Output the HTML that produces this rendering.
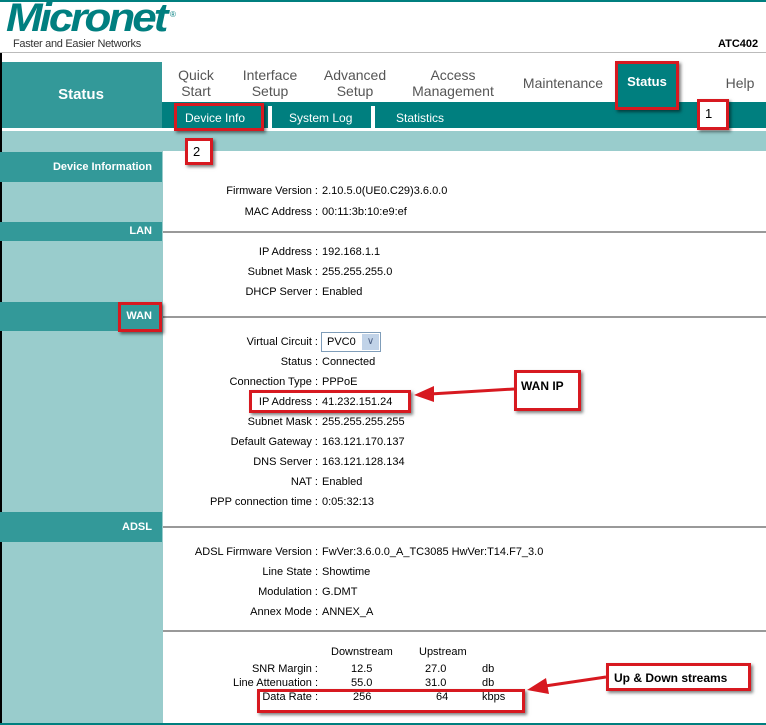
<!DOCTYPE html>
<html><head><meta charset="utf-8"><style>
*{margin:0;padding:0;box-sizing:border-box}
html,body{width:766px;height:725px;overflow:hidden}
body{position:relative;background:#fff;font-family:"Liberation Sans",sans-serif;font-size:11px;color:#000}
.a{position:absolute}
.l{position:absolute;right:448px;white-space:nowrap}
.v{position:absolute;left:322px;white-space:nowrap}
.row{position:absolute;left:0;width:766px;height:14px;line-height:14px}
.sh{position:absolute;left:0;width:162px;background:#339999;color:#fff;font-weight:bold;text-align:right;padding-right:10px}
.hl{position:absolute;left:163px;right:0;height:2px;background:#999}
.nav{position:absolute;color:#555;font-size:14px;text-align:center;line-height:16px}
.red{position:absolute;border:3px solid #d71920;box-shadow:2px 2px 3px rgba(0,0,0,.5)}
</style></head><body>
<div class="a" style="left:0;top:0;width:766px;height:2px;background:#007f7f"></div>
<div class="a" style="left:6px;top:-4px;font-size:44px;font-weight:bold;font-style:italic;color:#007f80;letter-spacing:-3px;transform:scaleY(0.9);transform-origin:top left">Micronet</div>
<div class="a" style="left:170px;top:10px;font-size:8px;color:#007f80">®</div>
<div class="a" style="left:13px;top:38px;font-size:11px;color:#333;letter-spacing:-0.3px">Faster and Easier Networks</div>
<div class="a" style="left:718px;top:38px;font-size:11px;font-weight:bold">ATC402</div>
<div class="a" style="left:0;top:52px;width:766px;height:1px;background:#bbb"></div>
<div class="a" style="left:0;top:62px;width:162px;height:66px;background:#339999;color:#fff;font-size:15px;font-weight:bold;text-align:center;line-height:66px">Status</div>
<div class="a" style="left:162px;top:102px;width:604px;height:26px;background:#007f7f"></div>
<div class="nav" style="left:172px;top:67px;width:48px">Quick<br>Start</div>
<div class="nav" style="left:236px;top:67px;width:68px">Interface<br>Setup</div>
<div class="nav" style="left:318px;top:67px;width:74px">Advanced<br>Setup</div>
<div class="nav" style="left:405px;top:67px;width:96px">Access<br>Management</div>
<div class="nav" style="left:518px;top:75px;width:90px">Maintenance</div>
<div class="a" style="left:616px;top:62px;width:62px;height:46px;background:#007f7f;color:#fff;font-size:13px;font-weight:bold;text-align:center;line-height:40px">Status</div>
<div class="nav" style="left:720px;top:75px;width:40px">Help</div>
<div class="a" style="left:185px;top:111px;color:#fff;font-size:12px">Device Info</div>
<div class="a" style="left:268px;top:106px;width:4px;height:22px;background:#fff"></div>
<div class="a" style="left:289px;top:111px;color:#fff;font-size:12px">System Log</div>
<div class="a" style="left:371px;top:106px;width:4px;height:22px;background:#fff"></div>
<div class="a" style="left:396px;top:111px;color:#fff;font-size:12px">Statistics</div>
<div class="a" style="left:0;top:131px;width:766px;height:20px;background:#99cccc"></div>
<div class="a" style="left:0;top:151px;width:163px;height:574px;background:#99cccc"></div>
<div class="a" style="left:0;top:53px;width:2px;height:672px;background:#000"></div>
<div class="a" style="left:0;top:723px;width:766px;height:2px;background:#007f7f"></div>
<div class="sh" style="top:152px;height:30px;line-height:30px">Device Information</div>
<div class="sh" style="top:222px;height:19px;line-height:19px">LAN</div>
<div class="sh" style="top:302px;height:29px;line-height:29px">WAN</div>
<div class="sh" style="top:512px;height:30px;line-height:30px">ADSL</div>
<div class="hl" style="top:231px"></div>
<div class="hl" style="top:316px"></div>
<div class="hl" style="top:526px"></div>
<div class="hl" style="top:630px"></div>

<div class="row" style="top:184px"><span class="l">Firmware Version :</span><span class="v">2.10.5.0(UE0.C29)3.6.0.0</span></div>
<div class="row" style="top:205px"><span class="l">MAC Address :</span><span class="v">00:11:3b:10:e9:ef</span></div>
<div class="row" style="top:245px"><span class="l">IP Address :</span><span class="v">192.168.1.1</span></div>
<div class="row" style="top:265px"><span class="l">Subnet Mask :</span><span class="v">255.255.255.0</span></div>
<div class="row" style="top:285px"><span class="l">DHCP Server :</span><span class="v">Enabled</span></div>
<div class="row" style="top:335px"><span class="l">Virtual Circuit :</span></div>
<div class="a" style="left:321px;top:332px;width:60px;height:20px;border:1px solid #7f9db9;background:#fff;padding:3px 0 0 5px">PVC0</div>
<div class="a" style="left:362px;top:334px;width:17px;height:16px;background:#c1d3e8;color:#4d6185;font-size:10px;text-align:center;line-height:16px">&#x2228;</div>
<div class="row" style="top:355px"><span class="l">Status :</span><span class="v">Connected</span></div>
<div class="row" style="top:375px"><span class="l">Connection Type :</span><span class="v">PPPoE</span></div>
<div class="row" style="top:395px"><span class="l">IP Address :</span><span class="v">41.232.151.24</span></div>
<div class="row" style="top:415px"><span class="l">Subnet Mask :</span><span class="v">255.255.255.255</span></div>
<div class="row" style="top:435px"><span class="l">Default Gateway :</span><span class="v">163.121.170.137</span></div>
<div class="row" style="top:455px"><span class="l">DNS Server :</span><span class="v">163.121.128.134</span></div>
<div class="row" style="top:475px"><span class="l">NAT :</span><span class="v">Enabled</span></div>
<div class="row" style="top:495px"><span class="l">PPP connection time :</span><span class="v">0:05:32:13</span></div>
<div class="row" style="top:545px"><span class="l">ADSL Firmware Version :</span><span class="v">FwVer:3.6.0.0_A_TC3085 HwVer:T14.F7_3.0</span></div>
<div class="row" style="top:565px"><span class="l">Line State :</span><span class="v">Showtime</span></div>
<div class="row" style="top:585px"><span class="l">Modulation :</span><span class="v">G.DMT</span></div>
<div class="row" style="top:605px"><span class="l">Annex Mode :</span><span class="v">ANNEX_A</span></div>
<div class="a" style="left:331px;top:646px">Downstream</div>
<div class="a" style="left:419px;top:646px">Upstream</div>
<div class="row" style="top:662px"><span class="l">SNR Margin :</span><span class="a" style="left:351px">12.5</span><span class="a" style="left:425px">27.0</span><span class="a" style="left:482px">db</span></div>
<div class="row" style="top:676px"><span class="l">Line Attenuation :</span><span class="a" style="left:351px">55.0</span><span class="a" style="left:425px">31.0</span><span class="a" style="left:482px">db</span></div>
<div class="row" style="top:690px"><span class="l">Data Rate :</span><span class="a" style="left:353px">256</span><span class="a" style="left:436px">64</span><span class="a" style="left:482px">kbps</span></div>

<div class="red" style="left:615px;top:61px;width:64px;height:49px"></div>
<div class="red" style="left:697px;top:99px;width:32px;height:31px;background:#fff;font-size:13px;padding:4px 0 0 5px">1</div>
<div class="red" style="left:174px;top:103px;width:90px;height:28px"></div>
<div class="red" style="left:185px;top:138px;width:28px;height:27px;background:#fff;font-size:13px;padding:3px 0 0 5px">2</div>
<div class="red" style="left:118px;top:302px;width:44px;height:30px"></div>
<div class="red" style="left:249px;top:390px;width:162px;height:23px"></div>
<div class="red" style="left:514px;top:370px;width:67px;height:41px;background:#fff;font-size:12px;font-weight:bold;padding:6px 0 0 4px">WAN IP</div>
<div class="red" style="left:257px;top:689px;width:268px;height:24px"></div>
<div class="red" style="left:606px;top:663px;width:145px;height:28px;background:#fff;font-size:12px;font-weight:bold;padding:5px 0 0 5px">Up &amp; Down streams</div>
<svg class="a" style="left:0;top:0" width="766" height="725">
<line x1="514" y1="389" x2="430" y2="394" stroke="#d71920" stroke-width="3"/>
<polygon points="414,395 434,386 434,402" fill="#d71920"/>
<line x1="606" y1="677" x2="545" y2="686" stroke="#d71920" stroke-width="3"/>
<polygon points="527,690 546,678 549,694" fill="#d71920"/>
</svg>
</body></html>
